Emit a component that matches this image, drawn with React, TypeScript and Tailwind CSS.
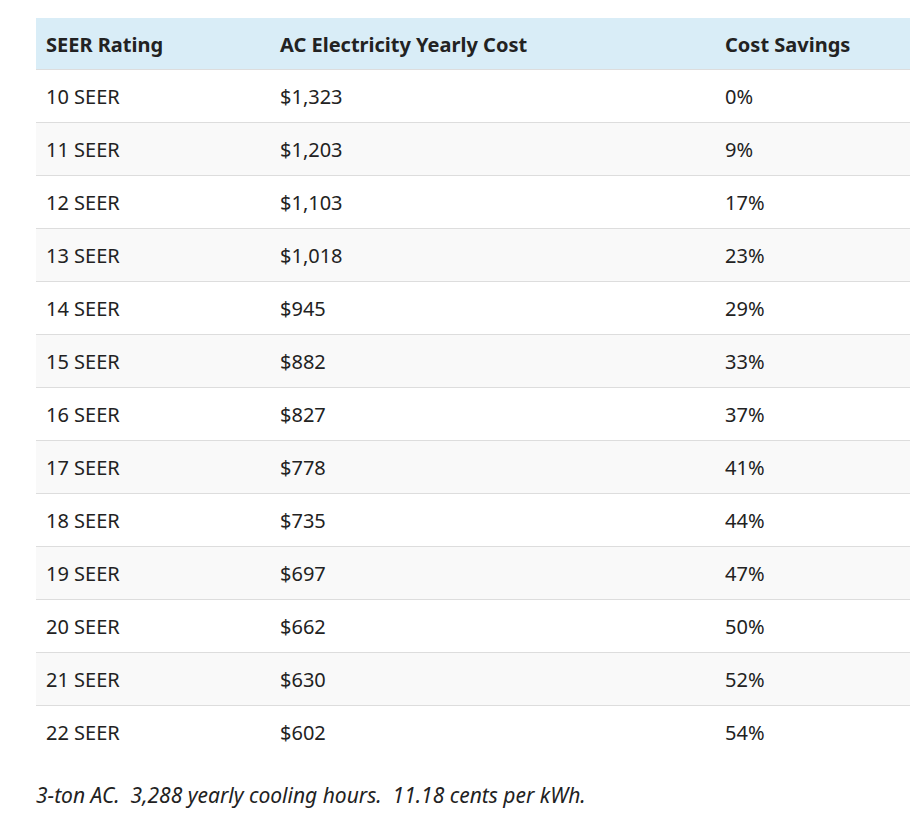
import React from "react";

const rows: [string, string, string][] = [
  ["10 SEER", "$1,323", "0%"],
  ["11 SEER", "$1,203", "9%"],
  ["12 SEER", "$1,103", "17%"],
  ["13 SEER", "$1,018", "23%"],
  ["14 SEER", "$945", "29%"],
  ["15 SEER", "$882", "33%"],
  ["16 SEER", "$827", "37%"],
  ["17 SEER", "$778", "41%"],
  ["18 SEER", "$735", "44%"],
  ["19 SEER", "$697", "47%"],
  ["20 SEER", "$662", "50%"],
  ["21 SEER", "$630", "52%"],
  ["22 SEER", "$602", "54%"],
];

export default function App() {
  return (
    <div
      className="w-[910px] h-[825px] bg-white text-[#222] overflow-hidden pl-[36px] pt-[18px]"
      style={{ fontFamily: '"Noto Sans", "Open Sans", sans-serif' }}
    >
      <table className="w-[874px] border-collapse text-[20px] table-fixed">
        <colgroup>
          <col className="w-[234px]" />
          <col className="w-[445px]" />
          <col />
        </colgroup>
        <thead>
          <tr className="bg-[#d9edf7] h-[51px]">
            <th className="text-left font-bold px-[10px] pt-[3px] pb-0">SEER Rating</th>
            <th className="text-left font-bold px-[10px] pt-[3px] pb-0">AC Electricity Yearly Cost</th>
            <th className="text-left font-bold px-[10px] pt-[3px] pb-0">Cost Savings</th>
          </tr>
        </thead>
        <tbody>
          {rows.map((r, i) => (
            <tr
              key={r[0]}
              className={`h-[53px] border-t border-[#dddddd] ${i % 2 === 1 ? "bg-[#f9f9f9]" : "bg-white"}`}
            >
              <td className="px-[10px] pt-[3px] pb-0">{r[0]}</td>
              <td className="px-[10px] pt-[3px] pb-0">{r[1]}</td>
              <td className="px-[10px] pt-[3px] pb-0">{r[2]}</td>
            </tr>
          ))}
        </tbody>
      </table>
      <p className="mt-[22px] italic text-[21px] whitespace-pre">
        {"3-ton AC.  3,288 yearly cooling hours.  11.18 cents per kWh."}
      </p>
    </div>
  );
}
